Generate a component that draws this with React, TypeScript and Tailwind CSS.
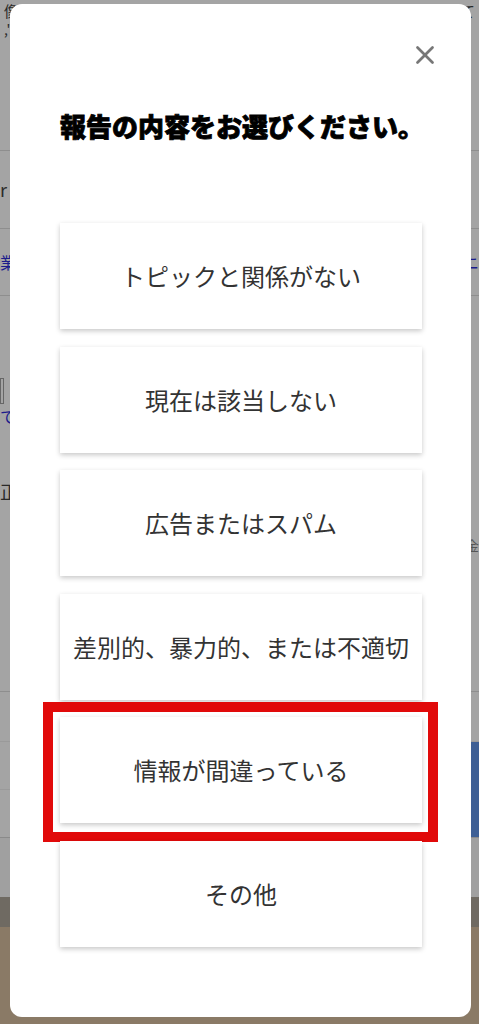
import { X } from "lucide-react";

const reasons = [
  "トピックと関係がない",
  "現在は該当しない",
  "広告またはスパム",
  "差別的、暴力的、または不適切",
  "情報が間違っている",
  "その他",
];

const jp = "font-['Noto_Sans_CJK_JP','Noto_Sans',sans-serif]";

const BackgroundPage = () => (
  <div className={`flex flex-col w-full ${jp} text-[#2a2a2a]`}>
    <div className="h-[151px] border-b border-[#8e8e8e] px-1 pt-[2px] text-[15px] leading-[18px]">
      <div className="flex justify-between">
        <span>像</span>
        <span>て</span>
      </div>
      <div className="text-[14px]">,&quot;</div>
    </div>
    <div className="h-[78px] border-b border-[#8e8e8e] flex items-center text-[18px]">
      <span>r</span>
    </div>
    <div className="h-[67px] border-b border-[#8e8e8e] flex items-center justify-between text-[16px] text-[#1c1c8c]">
      <span>業</span>
      <span>ニ</span>
    </div>
    <div className="h-[396px] border-b border-[#8e8e8e] pt-[82px] text-[18px] text-[#1c1c8c]">
      <div className="h-[26px] w-[4px] border border-[#666]" />
      <div className="text-[16px]">て(</div>
      <div className="mt-[50px] text-[#2a2a2a]">正</div>
      <div className="mt-[30px] flex justify-end text-[14px] text-[#555]">金</div>
    </div>
    <div className="h-[50px] border-b border-[#9a9a9a]" />
    <div className="h-[48px] border-b border-[#9a9a9a] flex justify-end">
      <div className="w-[20px] h-[96px] bg-[#3e5f95] rounded-l-[8px]" />
    </div>
    <div className="h-[48px] border-b border-[#8a8a8a]" />
    <div className="h-[59px] bg-[#a0a0a0]" />
    <div className="h-[30px] bg-[#6f6a62]" />
    <div className="h-[98px] bg-[#8a7a66]" />
  </div>
);

export default function App() {
  return (
    <div className="relative h-[1024px] w-full overflow-hidden bg-[#a4a4a4]">
      <BackgroundPage />
      <div
        className={`absolute left-[10px] top-[4px] w-[461px] h-[1013px] rounded-[12px] bg-white ${jp} flex flex-col`}
      >
        <div className="flex justify-end pt-[39px] pr-[34px]">
          <button className="w-[24px] h-[24px] text-[#777]">
            <X className="w-[30px] h-[30px] -m-[3px]" strokeWidth={2.2} />
          </button>
        </div>
        <h2 className="mt-[46px] pl-[50px] text-[26px] leading-[26px] font-black text-black [-webkit-text-stroke:0.8px_black]">
          報告の内容をお選びください。
        </h2>
        <div className="mt-[84px] pl-[50px] flex flex-col gap-[17.6px]">
          {reasons.map((reason, i) => (
            <div key={reason} className="relative w-[362px]">
              <button className="w-full h-[106px] bg-white flex items-center justify-center text-[24px] text-[#333] shadow-[0_2px_5px_rgba(0,0,0,0.22)]">
                {reason}
              </button>
              {i === 4 && (
                <div className="pointer-events-none absolute -left-[17px] -top-[15px] w-[395px] h-[140px] border-[10px] border-[#e10a0a]" />
              )}
            </div>
          ))}
        </div>
      </div>
    </div>
  );
}
